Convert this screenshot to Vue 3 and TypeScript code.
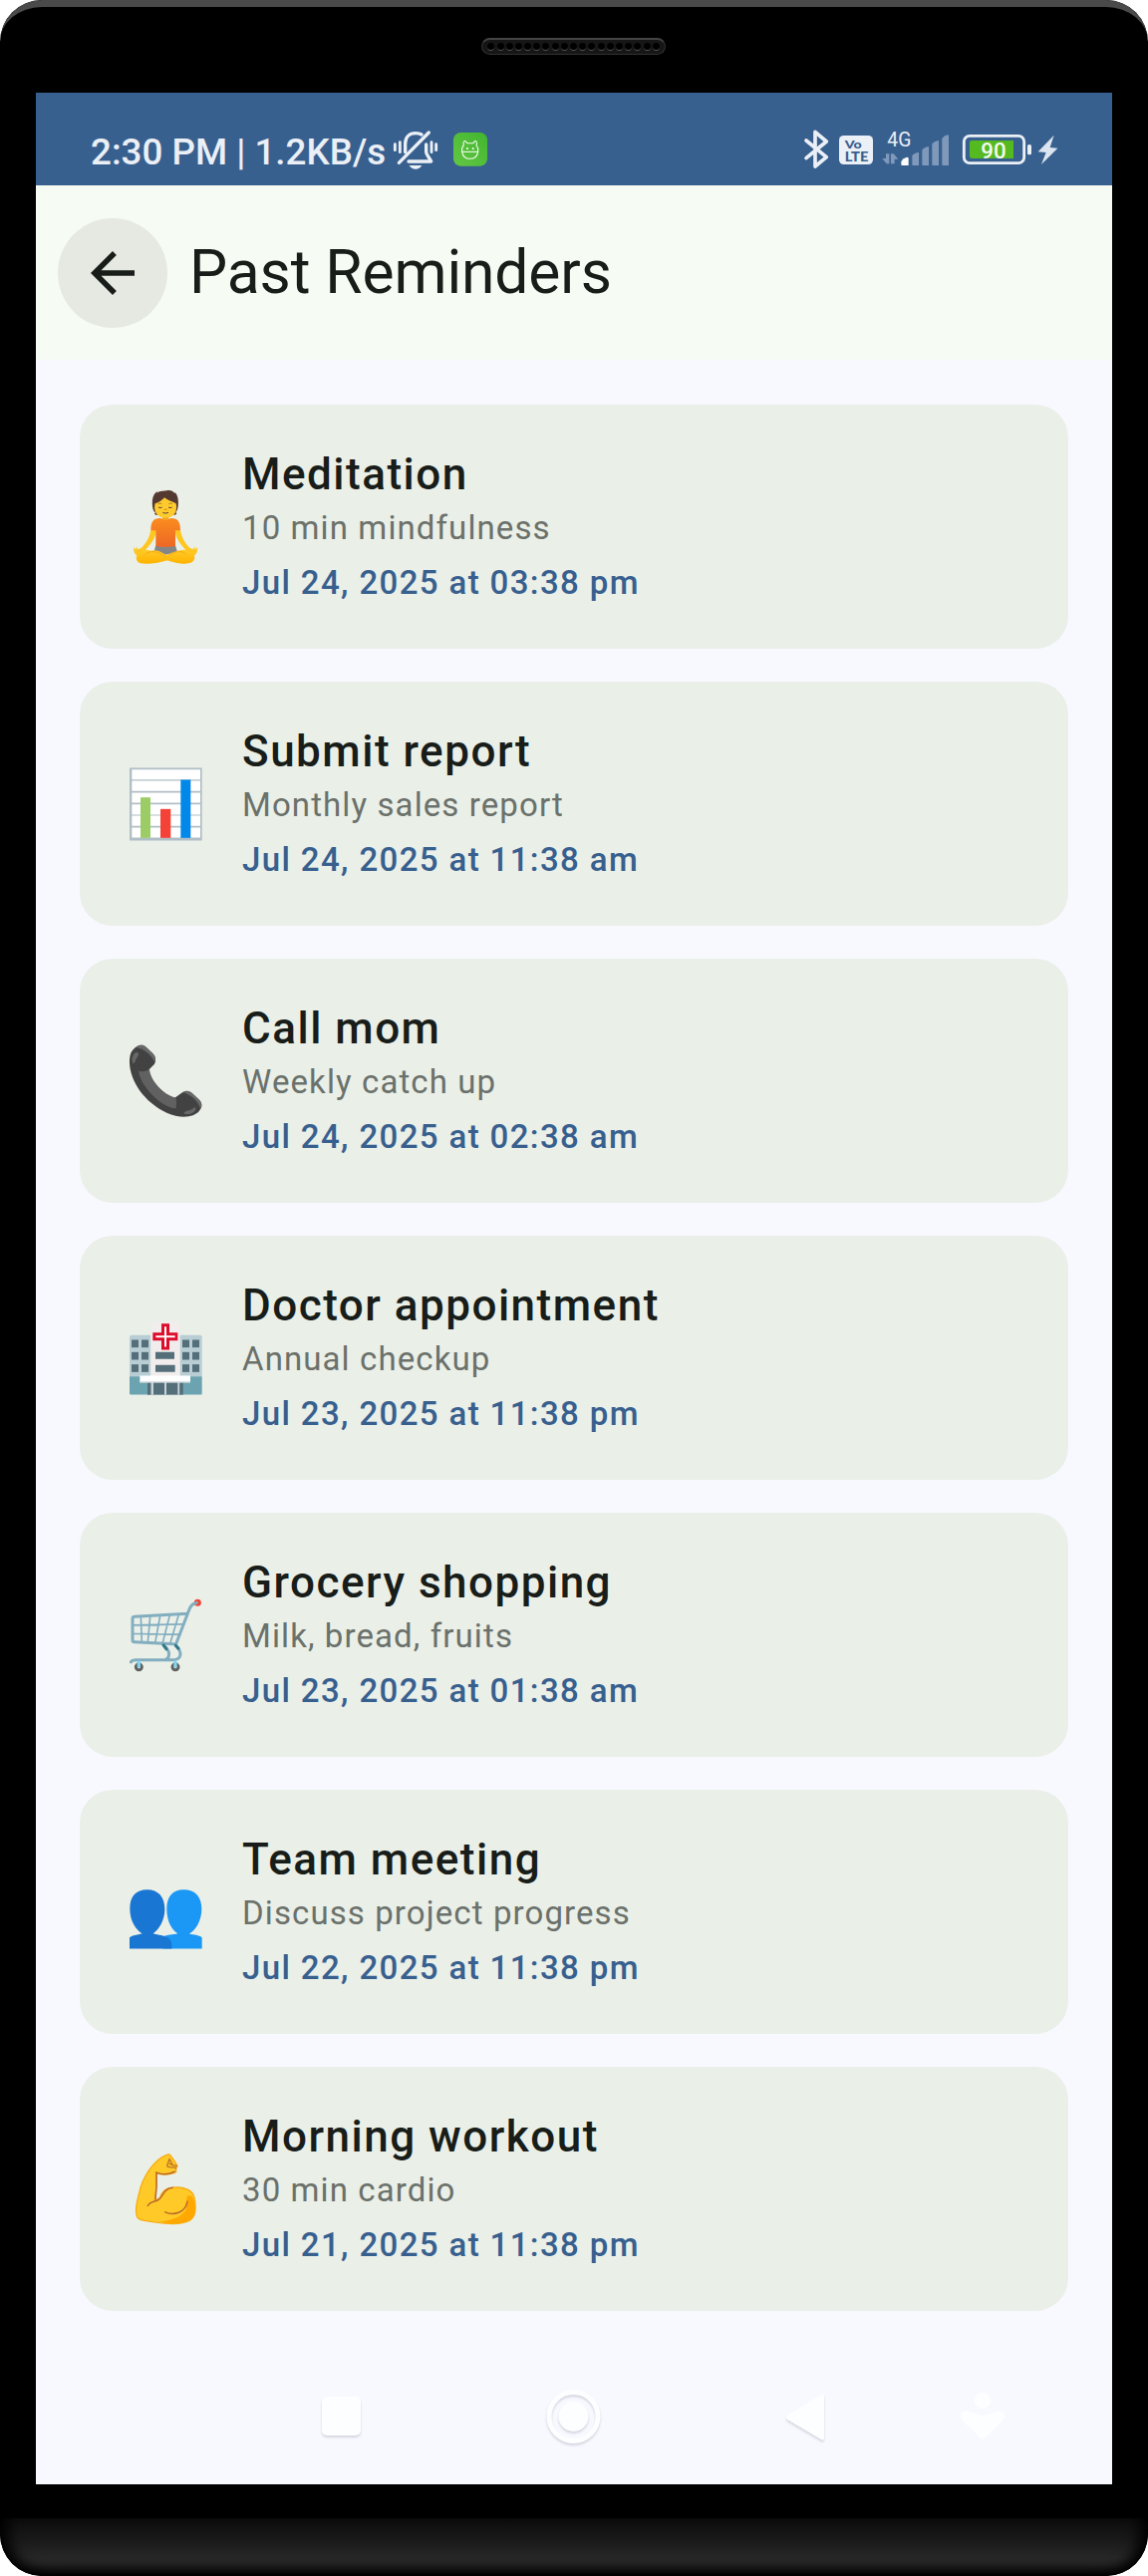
<script setup lang="ts">
interface Reminder {
  icon: string
  title: string
  note: string
  date: string
  viewBox: string
}

const reminders: Reminder[] = [
  { icon: 'yoga', title: 'Meditation', note: '10 min mindfulness', date: 'Jul 24, 2025 at 03:38 pm', viewBox: '0 0 330 330' },
  { icon: 'chart', title: 'Submit report', note: 'Monthly sales report', date: 'Jul 24, 2025 at 11:38 am', viewBox: '0 4.5 330 330' },
  { icon: 'phone', title: 'Call mom', note: 'Weekly catch up', date: 'Jul 24, 2025 at 02:38 am', viewBox: '0 -1.5 330 330' },
  { icon: 'hospital', title: 'Doctor appointment', note: 'Annual checkup', date: 'Jul 23, 2025 at 11:38 pm', viewBox: '0 -7.5 330 330' },
  { icon: 'cart', title: 'Grocery shopping', note: 'Milk, bread, fruits', date: 'Jul 23, 2025 at 01:38 am', viewBox: '0 1.5 330 330' },
  { icon: 'team', title: 'Team meeting', note: 'Discuss project progress', date: 'Jul 22, 2025 at 11:38 pm', viewBox: '0 -19.5 330 330' },
  { icon: 'muscle', title: 'Morning workout', note: '30 min cardio', date: 'Jul 21, 2025 at 11:38 pm', viewBox: '0 -10.5 330 330' },
]

const windowRows = [102, 139, 176]
const windowCols = [66, 96, 219, 249]
</script>

<template>
  <div class="phone">
    <div class="top-bezel">
      <div class="speaker"><i v-for="n in 19" :key="n" class="hole"></i></div>
    </div>

    <div class="screen">
      <header class="status">
        <span class="clock">2:30 PM | 1.2KB/s</span>
        <svg class="bell" viewBox="69 30 180 168" fill="none" stroke="#ebeff6" stroke-linecap="round" stroke-linejoin="round">
          <path d="M91 160 L181 69" stroke-width="10" />
          <path d="M110 128 V103 C110 82 123 71 141 71 C149 71 154 72 159 75" stroke-width="10" />
          <path d="M173 105 V128 C174 138 183 144 188 156 H120" stroke-width="10" />
          <path d="M79 104 V122 M94 98 V128 M189 98 V128 M203 104 V122" stroke-width="8.5" />
          <path d="M122 168 H160 C155 176 149 179 141 179 C133 179 127 176 122 168 Z" fill="#ebeff6" stroke="none" />
        </svg>
        <svg class="app-badge" viewBox="249 30 114 168" fill="none">
          <defs>
            <linearGradient id="badgeFill" x1="0" y1="1" x2="1" y2="0">
              <stop offset="0" stop-color="#63c744" /><stop offset="1" stop-color="#41b52f" />
            </linearGradient>
          </defs>
          <rect x="255" y="69" width="102" height="101" rx="22" fill="url(#badgeFill)" />
          <g stroke="#f4fff0" stroke-width="3.2" stroke-linejoin="round">
            <path d="M286 107 C283 98 288 92 293 96 L296 101 H315 L318 96 C323 92 328 98 324 107 C329 113 330 121 329 127 C327 140 318 148 305 148 C292 148 283 140 281 127 C280 121 281 113 286 107 Z" />
            <path d="M281 127 H329" />
          </g>
          <circle cx="297" cy="117" r="3" fill="#fff" /><circle cx="314" cy="117" r="3" fill="#fff" />
        </svg>
        <div class="spacer"></div>
        <svg class="bt" viewBox="45 30 105 168" fill="none" stroke="#ebeff6" stroke-width="11" stroke-linejoin="round" stroke-linecap="round">
          <path d="M57 93 L118 143 L84 171 V67 L118 96 L57 146" />
        </svg>
        <svg class="volte" viewBox="150 30 120 168">
          <rect x="156" y="78" width="102" height="87" rx="14" fill="#ebeff6" />
          <g fill="#38608f" font-family="Lato, sans-serif" font-weight="900">
            <text x="173" y="117" font-size="36" textLength="51" lengthAdjust="spacingAndGlyphs">Vo</text>
            <text x="173" y="155" font-size="38" textLength="71" lengthAdjust="spacingAndGlyphs">LTE</text>
          </g>
        </svg>
        <svg class="signal" viewBox="270 30 240 168">
          <text x="301" y="111" font-family="Roboto, sans-serif" font-size="59" fill="#ebeff6" textLength="72" lengthAdjust="spacingAndGlyphs">4G</text>
          <g fill="#8099bb">
            <path d="M297 133 H307 V163 H299 L286 147 H297 Z M312 133 H320 L334 149 H323 V163 H312 Z" />
            <path d="M376 138 Q382 130 396 128 V168 H379 Q376 168 376 165 Z" />
            <path d="M406 122 Q412 113 426 111 V168 H409 Q406 168 406 165 Z" />
            <path d="M436 104 Q442 95 456 93 V168 H439 Q436 168 436 165 Z" />
            <path d="M466 87 Q472 78 483 76 Q486 76 486 79 V168 H469 Q466 168 466 165 Z" />
          </g>
          <path d="M343 156 Q349 146 360 143 Q365 143 365 147 V168 H346 Q343 168 343 165 Z" fill="#fff" />
        </svg>
        <svg class="battery" viewBox="510 30 240 168">
          <rect x="532" y="79" width="181" height="82" rx="17" fill="none" stroke="#ebeff6" stroke-width="8.5" />
          <path d="M556 93 H681 V147 H556 Q549 147 549 140 V100 Q549 93 556 93 Z" fill="#55ba20" />
          <rect x="723" y="105" width="12" height="31" rx="5" fill="#ebeff6" />
          <text x="583" y="146" font-family="Roboto, sans-serif" font-weight="500" font-size="67" fill="#f5faf2" textLength="76" lengthAdjust="spacingAndGlyphs">90</text>
        </svg>
        <svg class="bolt" viewBox="750 30 75 168">
          <path d="M803 77 L755 127 L779 129 L765 165 L814 116 L791 114 Z" fill="#dce5ef" />
        </svg>
      </header>

      <div class="app-bar">
        <button class="back" aria-label="Back">
          <svg viewBox="0 0 24 24"><path d="M20 11H7.83l5.59-5.59L12 4l-8 8 8 8 1.41-1.41L7.83 13H20v-2z" fill="#181d19" /></svg>
        </button>
        <h1>Past Reminders</h1>
      </div>

      <main class="list">
        <article v-for="r in reminders" :key="r.title" class="card">
          <svg class="emoji" :viewBox="r.viewBox">
            <g v-if="r.icon === 'yoga'">
              <defs>
                <linearGradient id="shirt" x1="0" y1="0" x2="0" y2="1">
                  <stop offset="0" stop-color="#fb8c1f" /><stop offset="1" stop-color="#ed6724" />
                </linearGradient>
                <linearGradient id="leg" x1="0" y1="0" x2="0" y2="1">
                  <stop offset="0" stop-color="#ffca28" /><stop offset="1" stop-color="#ffb300" />
                </linearGradient>
              </defs>
              <path d="M124 174 L140 174 C139 196 127 213 110 231 C107 246 96 251 83 251 C76 247 71 238 73 226 L80 233 L80 223 L86 232 L96 227 C111 212 119 198 124 174 Z" fill="#fec61f" />
              <path d="M213 174 L197 174 C198 196 210 213 227 231 C230 246 241 251 254 251 C261 247 266 238 264 226 L257 233 L257 223 L251 232 L241 227 C226 212 218 198 213 174 Z" fill="#fec61f" />
              <path d="M139 220 H198 L204 240 L168 248 L133 240 Z" fill="#858585" />
              <path d="M102 235 C122 228 155 250 204 262 L176 264 C150 273 118 277 94 274 C80 271 77 257 84 247 Z" fill="url(#leg)" />
              <path d="M235 235 C218 230 198 237 172 249 L150 238 C139 233 125 234 125 239 C145 252 183 274 222 275 C246 276 260 267 255 250 Z" fill="url(#leg)" />
              <path d="M107 248 C120 233 145 236 170 256 M230 247 C218 233 195 239 181 248" fill="none" stroke="#f29b12" stroke-width="2" />
              <path d="M148 138 C157 137 161 142 168 142 C176 142 181 137 190 138 C207 140 213 151 213 175 H198 V222 Q168 228 139 222 V175 H124 C124 151 130 140 148 138 Z" fill="url(#shirt)" />
              <path d="M159 129 H178 V140 Q168 147 159 140 Z" fill="#f5a719" />
              <path d="M141 129 L135 125 L138 121 L133 117 C127 104 126 78 135 65 L143 57 L143 62 C153 54 162 58 174 54 C186 53 192 58 193 61 L199 62 C208 73 209 99 203 115 L199 120 L202 124 L196 129 L190 126 L148 126 Z" fill="#543930" />
              <path d="M137 94 C148 91 160 82 165 76 C174 84 188 88 200 94 C204 113 197 127 188 132 C178 138 159 138 149 132 C139 126 132 113 137 94 Z" fill="#fecb2f" />
              <path d="M146 95 q6-4 11 0 M178 95 q6-4 11 0" fill="none" stroke="#a36f25" stroke-width="2.5" />
              <path d="M147 105 q6 4 11 0 M177 105 q6 4 11 0 M160 121 q8 5 17 0" fill="none" stroke="#5d4037" stroke-width="3" />
              <path d="M164 112 h9" stroke="#e59600" stroke-width="4" />
            </g>
            <g v-else-if="r.icon === 'chart'">
              <rect x="60" y="60" width="218" height="219" fill="#b0bec5" />
              <path d="M67 65 H273 V95 H67 Z M67 99 H273 V130 H67 Z M67 135 H273 V165 H67 Z M67 170 H273 V201 H67 Z M67 204 H273 V235 H67 Z M67 240 H273 V270 H67 Z" fill="#fff" />
              <rect x="93" y="149" width="30" height="122" fill="#9ccc65" />
              <rect x="153" y="184" width="31" height="87" fill="#f44336" />
              <rect x="214" y="96" width="30" height="175" fill="#0288e9" />
            </g>
            <g v-else-if="r.icon === 'phone'">
              <path d="M77 62 Q91 48 108 60 L130 81 Q144 95 135 112 L119 128 C120 160 160 204 197 213 L217 199 Q232 187 247 199 L272 223 Q283 238 270 253 C253 274 213 277 172 259 C103 226 62 163 60 109 C60 85 63 74 77 62 Z" fill="#424242" />
              <path d="M87 132 Q103 139 120 127 C121 158 160 205 200 214 Q202 229 200 245 C162 247 92 181 87 132 Z" fill="#616161" />
              <path d="M80 62 Q92 49 107 58 L131 80 Q142 91 135 106 C130 89 107 66 80 62 Z M222 197 Q234 188 247 198 L270 219 Q283 233 273 246 C267 222 244 204 222 197 Z" fill="#686868" />
              <path d="M68 102 C67 84 78 72 86 78 C91 83 80 93 77 103 C74 112 68 112 68 102 Z M226 262 C220 258 229 253 240 251 C249 248 255 241 258 242 C264 248 251 266 226 262 Z" fill="#686868" />
            </g>
            <g v-else-if="r.icon === 'hospital'">
              <path d="M64 88 H124 V213 H60 V92 Z M212 88 H274 L278 92 V213 H212 Z" fill="#b9ced4" />
              <path d="M60 212 H278 V263 Q278 267 274 267 H64 Q60 267 60 263 Z" fill="#6ba4b0" />
              <rect x="124" y="48" width="87" height="165" fill="#f1eded" />
              <template v-for="y in windowRows" :key="y">
                <rect v-for="x in windowCols" :key="x" :x="x" :y="y" width="21" height="23" fill="#546e7a" />
              </template>
              <path d="M138 139 H195 V160 H138 Z M138 178 H197 V199 H138 Z" fill="#546e7a" />
              <path d="M114 229 H221 V267 H114 Z" fill="#78909c" />
              <path d="M124 229 H211 V267 H124 Z" fill="#c7d4da" />
              <path d="M132 229 H165 V267 H132 Z M171 229 H205 V267 H171 Z M114 229 H124 V267 H114 Z M211 229 H221 V267 H211 Z" fill="#546e7a" />
              <path d="M91 210 H243 V230 H91 Z" fill="#fff" />
              <path d="M91 227 H243 V231 H91 Z" fill="#cfd8dc" />
              <path d="M156 53 H180 V80 H205 V104 H180 V132 H156 V104 H130 V80 H156 Z" fill="#dc0d2b" />
              <path d="M168 62 V123 M139 92 H197" stroke="#fff" stroke-width="6" />
            </g>
            <g v-else-if="r.icon === 'cart'" fill="none" stroke="#82aec0" stroke-linejoin="round" stroke-linecap="round">
              <path d="M94 112 L97 187 M122 111 L115 188 M152 108 L137 190 M181 106 L159 192 M208 104 L182 192 M72 136 L224 133 M71 162 L214 164" stroke-width="5" />
              <path d="M262 68 C245 71 241 85 235 101 L201 190 Q199 194 193 193 L75 187 Q69 187 69 181 V116 Q69 110 75 110 L235 101" stroke-width="9" />
              <path d="M164 197 C178 210 182 221 177 233 L169 240 M201 199 C219 219 218 240 188 241 H79 Q68 241 64 247" stroke-width="9" />
              <path d="M162 196 L171 208 M199 197 L207 206" stroke="#2f7889" stroke-width="9" />
              <circle cx="265" cy="68" r="10.5" fill="#f44336" stroke="none" /><path d="M249 74 L263 68" stroke-width="8" />
              <circle cx="88" cy="262" r="9" stroke="#616161" stroke-width="9" /><circle cx="198" cy="262" r="9" stroke="#616161" stroke-width="9" />
              <path d="M88 247 V260 M198 247 V260" stroke="#82d5ee" stroke-width="10" />
            </g>
            <g v-else-if="r.icon === 'team'">
              <path d="M205 209 C188 199 172 174 172 135 C172 97 190 77 223 77 C257 77 277 98 277 135 C277 173 258 200 240 210 C254 214 268 213 278 221 V255 H160 V219 C174 211 190 214 205 209 Z" fill="#1b98f5" />
              <path d="M98 209 C79 199 61 171 61 135 C61 96 80 77 113 77 C146 77 166 98 166 136 C166 171 148 198 131 209 C142 213 174 214 183 229 Q187 236 187 255 H60 V221 C70 213 83 214 98 209 Z" fill="#1976d2" />
            </g>
            <g v-else>
              <path d="M176 49 C133 64 99 116 88 169 C79 201 76 222 83 238 C91 250 110 249 135 253 C177 260 215 262 241 248 C259 238 261 211 255 179 C250 155 223 146 190 149 C171 149 156 162 151 181 L136 188 C141 158 142 127 141 106 C159 112 188 111 200 102 V90 L204 85 C198 72 187 58 181 50 Z" fill="#ffca28" stroke="#f8ad12" stroke-width="4" stroke-linejoin="round" />
              <path d="M247 174 C264 203 262 241 240 248 C213 261 180 259 153 252 C180 248 208 242 222 226 C240 211 225 188 235 173 Z" fill="#ffa800" />
              <path d="M115 204 C121 190 137 192 147 186 C162 175 162 152 190 149 M167 223 C193 234 228 226 234 191 M138 184 C141 161 142 125 141 104 C158 110 176 112 196 101" fill="none" stroke="#b9692b" stroke-width="4.5" stroke-linecap="round" />
              <path d="M180 63 L173 83 C174 91 187 86 195 89 L200 91 M180 63 L189 80 M180 77 L191 82 L202 84" fill="none" stroke="#c27625" stroke-width="4" stroke-linecap="round" stroke-linejoin="round" />
            </g>
          </svg>
          <div class="copy">
            <h2>{{ r.title }}</h2>
            <p class="note">{{ r.note }}</p>
            <p class="date">{{ r.date }}</p>
          </div>
        </article>
      </main>

      <nav class="nav">
        <svg viewBox="0 2319 1080 174">
          <g class="lifted" fill="#fdfeff">
            <rect x="287" y="2405" width="39" height="39" rx="5" />
            <circle cx="539.5" cy="2425" r="24.5" fill="none" stroke="#fdfeff" stroke-width="5" />
            <circle cx="539.5" cy="2425" r="15" />
            <path d="M788 2403 Q791 2401 791 2405 V2446 Q791 2450 788 2448 L754 2428 Q752 2426 754 2424 Z" />
          </g>
          <g fill="#fdfeff">
            <circle cx="950" cy="2409" r="8.3" />
            <path d="M936 2420 L950 2424 L964 2420 Q972 2418 972 2424 Q972 2427 970 2429 L953 2446 Q950 2449 947 2446 L930 2429 Q928 2427 928 2424 Q928 2418 936 2420 Z" />
          </g>
        </svg>
      </nav>
    </div>

    <div class="gap"></div>
    <div class="chin"></div>
  </div>
</template>

<style>
body { margin: 0; background: #fff; }
</style>

<style scoped>
.phone {
  width: 1152px;
  height: 2585px;
  background: #000;
  border-radius: 42px;
  overflow: hidden;
  font-family: Roboto, sans-serif;
  display: flex;
  flex-direction: column;
}
.top-bezel {
  height: 93px;
  box-sizing: border-box;
  border-top: 7px solid #4a4a4a;
  border-radius: 42px 42px 0 0;
  padding-top: 31px;
  flex: none;
}
.speaker {
  width: 185px;
  height: 17px;
  box-sizing: border-box;
  margin: 0 0 0 483px;
  border-radius: 9px;
  background: #161616;
  border: 1px solid #303030;
  border-top: 2px solid #444;
  display: flex;
  align-items: center;
  justify-content: center;
  gap: 2.2px;
}
.hole {
  width: 7px;
  height: 8px;
  box-sizing: border-box;
  border-radius: 50%;
  background: #000;
  border-bottom: 1px solid #555;
}
.screen {
  width: 1080px;
  height: 2400px;
  margin: 0 36px;
  background: #f8f9ff;
  display: flex;
  flex-direction: column;
  flex: none;
}
.status {
  height: 93px;
  box-sizing: border-box;
  background: #38608f;
  padding: 27px 51px 0 55px;
  display: flex;
  align-items: flex-start;
}
.status svg { height: 56px; flex: none; }
.clock {
  width: 302px;
  flex: none;
  color: #ebeff6;
  font-size: 36.75px;
  font-weight: 500;
  line-height: 65px;
  white-space: nowrap;
}
.bell { width: 60px; }
.app-badge { width: 38px; }
.spacer { flex: 1; }
.bt { width: 35px; }
.volte { width: 40px; }
.signal, .battery { width: 80px; }
.bolt { width: 25px; }
.app-bar {
  height: 175px;
  flex: none;
  background: #f6fbf4;
  display: flex;
  align-items: center;
  padding-left: 22px;
}
.back {
  width: 110px;
  height: 110px;
  border: 0;
  padding: 0;
  border-radius: 50%;
  background: #e5e9e2;
  display: grid;
  place-items: center;
  flex: none;
}
.back svg { width: 66px; height: 66px; display: block; }
h1 {
  margin: 0 0 0 22px;
  font-size: 60.5px;
  font-weight: 400;
  line-height: 77px;
  letter-spacing: -0.1px;
  color: #181d19;
}
.list {
  padding: 45px 44px 0;
  display: flex;
  flex-direction: column;
  gap: 33px;
}
.card {
  height: 245px;
  border-radius: 33px;
  background: #eaefe8;
  display: flex;
  align-items: center;
  padding-left: 30px;
}
.emoji { width: 110px; height: 110px; flex: none; }
.copy { padding: 0 0 8px 23px; }
.copy > * { margin: 0; white-space: nowrap; }
.copy h2 {
  margin-bottom: -1px;
  font-size: 44px;
  font-weight: 500;
  line-height: 66px;
  letter-spacing: 1.5px;
  color: #181d19;
}
.note {
  font-size: 33px;
  line-height: 44px;
  letter-spacing: 1.1px;
  color: #6b716b;
}
.copy .date {
  padding-top: 11px;
  font-size: 33px;
  font-weight: 500;
  line-height: 44px;
  letter-spacing: 1.375px;
  color: #38608f;
}
.nav { flex: 1; }
.nav svg { width: 1080px; height: 174px; display: block; }
.lifted { filter: drop-shadow(0 2px 1px rgba(70, 70, 90, 0.2)); }
.gap { height: 34px; flex: none; }
.chin {
  height: 58px;
  border-radius: 0 0 42px 42px;
  background: linear-gradient(#0c0c0c, #1a1a1a 40%, #272727 68%, #242424 78%, #101010 94%, #000);
  box-shadow: inset 14px -4px 14px -6px #000, inset -14px -4px 14px -6px #000;
}
</style>
